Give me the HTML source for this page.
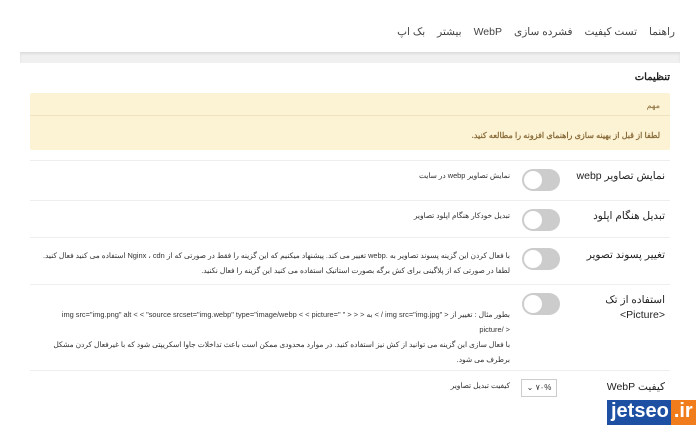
<!DOCTYPE html>
<html dir="rtl"><head><meta charset="utf-8"><style>
body{margin:0;width:700px;height:425px;background:#fff;font-family:"Liberation Sans","Noto Sans CJK SC",sans-serif;color:#333;position:relative;overflow:hidden}
.nav{position:absolute;right:25px;top:26px;font-size:10.5px;color:#444;display:flex;gap:12px}
.bar{position:absolute;left:20px;right:20px;top:52px;height:11px;background:#f0f0f0;box-shadow:inset 0 2px 2px #ddd}
.h{position:absolute;right:30px;top:72px;font-size:10px;font-weight:bold;color:#222}
.note{position:absolute;left:30px;right:30px;top:93px;height:57px;background:#fcf3d5;border-radius:2px;font-size:8px;color:#8a6d3b}
.note .a{position:absolute;right:10px;top:8px}
.note hr{position:absolute;left:0;right:0;top:22px;margin:0;border:0;border-top:1px solid #f0e4bd}
.note .b{position:absolute;right:10px;top:38px;font-weight:bold}
.row{position:absolute;left:30px;right:30px;border-top:1px solid #eee}
.lab{position:absolute;right:5px;font-size:10.5px;color:#222;width:90px;line-height:15px}
.tg{position:absolute;right:110px;width:38px;height:22px;border-radius:11px;background:#ccc}
.tg:after{content:"";position:absolute;left:2px;top:2px;width:18px;height:18px;border-radius:50%;background:#fff}
.d{position:absolute;right:160px;left:0;font-size:7.4px;color:#333;line-height:15px;white-space:nowrap}
.sel{position:absolute;right:113px;width:34px;height:16px;border:1px solid #ccc;font-size:8px;line-height:16px;text-align:center}
.wm{position:absolute;left:607px;top:400px;height:25px;width:93px;display:flex;font:bold 20px "Liberation Sans",sans-serif}
</style></head><body>
<div class="nav"><span>راهنما</span><span>تست کیفیت</span><span>فشرده سازی</span><span>WebP</span><span>بیشتر</span><span>بک اپ</span></div>
<div class="bar"></div>
<div class="h">تنظیمات</div>
<div class="note"><div class="a">مهم</div><hr><div class="b">لطفا از قبل از بهینه سازی راهنمای افزونه را مطالعه کنید.</div></div>
<div class="row" style="top:160px;height:40px"><div class="lab" style="top:8px">نمایش تصاویر webp</div><div class="tg" style="top:8px"></div><div class="d" style="top:7px">نمایش تصاویر webp در سایت</div></div>
<div class="row" style="top:200px;height:37px"><div class="lab" style="top:8px">تبدیل هنگام اپلود</div><div class="tg" style="top:8px"></div><div class="d" style="top:7px">تبدیل خودکار هنگام اپلود تصاویر</div></div>
<div class="row" style="top:237px;height:47px"><div class="lab" style="top:10px">تغییر پسوند تصویر</div><div class="tg" style="top:10px"></div><div class="d" style="top:10px">با فعال کردن این گزینه پسوند تصاویر به .webp تغییر می کند. پیشنهاد میکنیم که این گزینه را فقط در صورتی که از Nginx ، cdn استفاده می کنید فعال کنید.<br>لطفا در صورتی که از پلاگینی برای کش برگه بصورت استاتیک استفاده می کنید این گزینه را فعال نکنید.</div></div>
<div class="row" style="top:284px;height:86px"><div class="lab" style="top:8px">استفاده از تک &lt;Picture&gt;</div><div class="tg" style="top:8px"></div><div class="d" style="top:22px">بطور مثال : تغییر از &lt; "img src="img.jpg / &gt; به &lt; &lt; &lt; " "=img src="img.png" alt &lt; &lt; "source srcset="img.webp" type="image/webp &lt; &lt; picture<br>&lt; /picture<br>با فعال سازی این گزینه می توانید از کش نیز استفاده کنید. در موارد محدودی ممکن است باعث تداخلات جاوا اسکریپتی شود که با غیرفعال کردن مشکل<br>برطرف می شود.</div></div>
<div class="row" style="top:370px;height:40px"><div class="lab" style="top:9px">کیفیت WebP</div><div class="sel" style="top:8px">۷۰% ⌄</div><div class="d" style="top:7px">کیفیت تبدیل تصاویر</div></div>
<div class="wm" dir="ltr"><span style="background:#1d4fa3;color:#fff;padding:0 2px 0 4px">jetseo</span><span style="background:#f07c1c;color:#fff;padding:0 3px">.ir</span></div>
</body></html>
